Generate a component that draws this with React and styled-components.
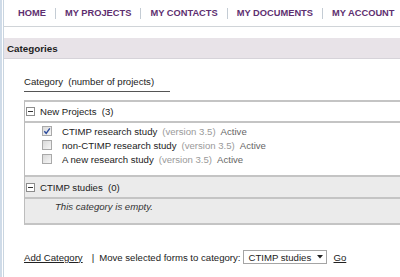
import React from "react";
import styled, { createGlobalStyle } from "styled-components";

const Global = createGlobalStyle`
  html, body { margin: 0; padding: 0; background: #fff; }
  body { font-family: "Liberation Sans", Arial, sans-serif; font-size: 9.6px; color: #222; }
`;

const Page = styled.div`
  display: flex;
  min-height: 277px;
  border-left: 2px solid #cfdbe8;
  padding-left: 1px;
  overflow: hidden;
`;

const Main = styled.div`
  flex: 1;
  border-left: 1px solid #c9d5e0;
  min-width: 0;
`;

const Nav = styled.nav`
  display: flex;
  align-items: center;
  height: 25px;
  padding: 1px 0 0 5px;
  border-bottom: 1px solid #d0d4d8;
  white-space: nowrap;
`;

const NavItem = styled.a`
  display: block;
  padding: 0 9px;
  font-size: 9.3px;
  font-weight: bold;
  color: #5e2f70;
  text-decoration: none;
  line-height: 11px;
  border-left: ${(p) => (p.$first ? "none" : "1px solid #c4ccd4")};
`;

const PanelHeader = styled.div`
  margin-top: 11px;
  height: 20px;
  display: flex;
  align-items: center;
  padding-left: 3px;
  background: #e8e3e8;
  border-bottom: 1px solid #d6d3d9;
  font-weight: bold;
  font-size: 9.8px;
  color: #1e1e1e;
`;

const Content = styled.div`
  padding: 17px 0 0 20px;
`;

const ListTitle = styled.div`
  width: 146px;
  line-height: 12px;
  padding-bottom: 3px;
  border-bottom: 1px solid #555;
  color: #222;
  white-space: pre;
`;

const Table = styled.div`
  margin-top: 8px;
  border-left: 1px solid #bdbdbd;
  border-top: 2px solid #c4c4c4;
  border-bottom: 2px solid #c4c4c4;
  margin-right: -10px;
`;

const GroupHead = styled.div`
  display: flex;
  align-items: center;
  height: ${(p) => (p.$h ? p.$h : 19)}px;
  padding-left: 1px;
  background: ${(p) => (p.$shade ? "#ebebeb" : "#fff")};
  border-bottom: 2px solid #c4c4c4;
  white-space: pre;
`;

const Minus = styled.span`
  position: relative;
  width: 7px;
  height: 7px;
  border: 1px solid #8c8c8c;
  background: #fff;
  margin-right: 5px;
  &::after {
    content: "";
    position: absolute;
    left: 1px;
    right: 1px;
    top: 3px;
    height: 1px;
    background: #333;
  }
`;

const Items = styled.div`
  padding: 1px 0 11px 17px;
`;

const Item = styled.div`
  display: flex;
  align-items: center;
  height: 14px;
  white-space: pre;
`;

const Box = styled.span`
  display: flex;
  align-items: center;
  justify-content: center;
  width: 8px;
  height: 8px;
  border: 1px solid #a9a9a9;
  background: linear-gradient(135deg, #d9d9d9, #f6f6f6);
  margin-right: 10px;
`;

const Title = styled.span`
  color: #222;
`;

const Version = styled.span`
  color: #9a9a9a;
  margin-left: 5px;
`;

const Status = styled.span`
  color: #666;
  margin-left: 5px;
`;

const Empty = styled.div`
  height: 24px;
  background: #ebebeb;
  padding: 2px 0 0 30px;
  box-sizing: border-box;
  font-style: italic;
  color: #333;
  line-height: 12px;
`;

const Footer = styled.div`
  display: flex;
  align-items: center;
  margin-top: 25px;
  white-space: pre;
  color: #222;
`;

const Link = styled.a`
  color: #222;
  text-decoration: underline;
`;

const Pipe = styled.span`
  margin: 0 5px 0 9px;
`;

const Select = styled.div`
  display: flex;
  align-items: center;
  justify-content: space-between;
  width: 84px;
  height: 14px;
  box-sizing: border-box;
  margin: 0 6px 0 3px;
  padding: 0 3px 0 4px;
  border: 1px solid #a5a5a5;
  background: #fff;
`;

const Check = () => (
  <svg width="8" height="8" viewBox="0 0 8 8">
    <path d="M1.3 4.2 L3.2 6.3 L6.8 1.4" fill="none" stroke="#2b4a9c" strokeWidth="1.4" />
  </svg>
);

const Caret = () => (
  <svg width="6" height="4" viewBox="0 0 6 4">
    <path d="M0 0 H6 L3 3.5 Z" fill="#222" />
  </svg>
);

const items = [
  { name: "CTIMP research study", checked: true },
  { name: "non-CTIMP research study", checked: false },
  { name: "A new research study", checked: false },
];

const nav = ["HOME", "MY PROJECTS", "MY CONTACTS", "MY DOCUMENTS", "MY ACCOUNT"];

export default function App() {
  return (
    <>
      <Global />
      <Page>
        <Main>
          <Nav>
            {nav.map((n, i) => (
              <NavItem key={n} $first={i === 0} href="#">
                {n}
              </NavItem>
            ))}
          </Nav>
          <PanelHeader>Categories</PanelHeader>
          <Content>
            <ListTitle>Category  (number of projects)</ListTitle>
            <Table>
              <GroupHead>
                <Minus />
                New Projects  (3)
              </GroupHead>
              <Items>
                {items.map((it) => (
                  <Item key={it.name}>
                    <Box>{it.checked && <Check />}</Box>
                    <Title>{it.name}</Title>
                    <Version>(version 3.5)</Version>
                    <Status>Active</Status>
                  </Item>
                ))}
              </Items>
              <GroupHead $shade $h={20} style={{ borderTop: "2px solid #c4c4c4", marginTop: -2 }}>
                <Minus />
                CTIMP studies  (0)
              </GroupHead>
              <Empty>This category is empty.</Empty>
            </Table>
            <Footer>
              <Link href="#">Add Category</Link>
              <Pipe>|</Pipe>
              <span>Move selected forms to category:</span>
              <Select>
                <span>CTIMP studies</span>
                <Caret />
              </Select>
              <Link href="#">Go</Link>
            </Footer>
          </Content>
        </Main>
      </Page>
    </>
  );
}
